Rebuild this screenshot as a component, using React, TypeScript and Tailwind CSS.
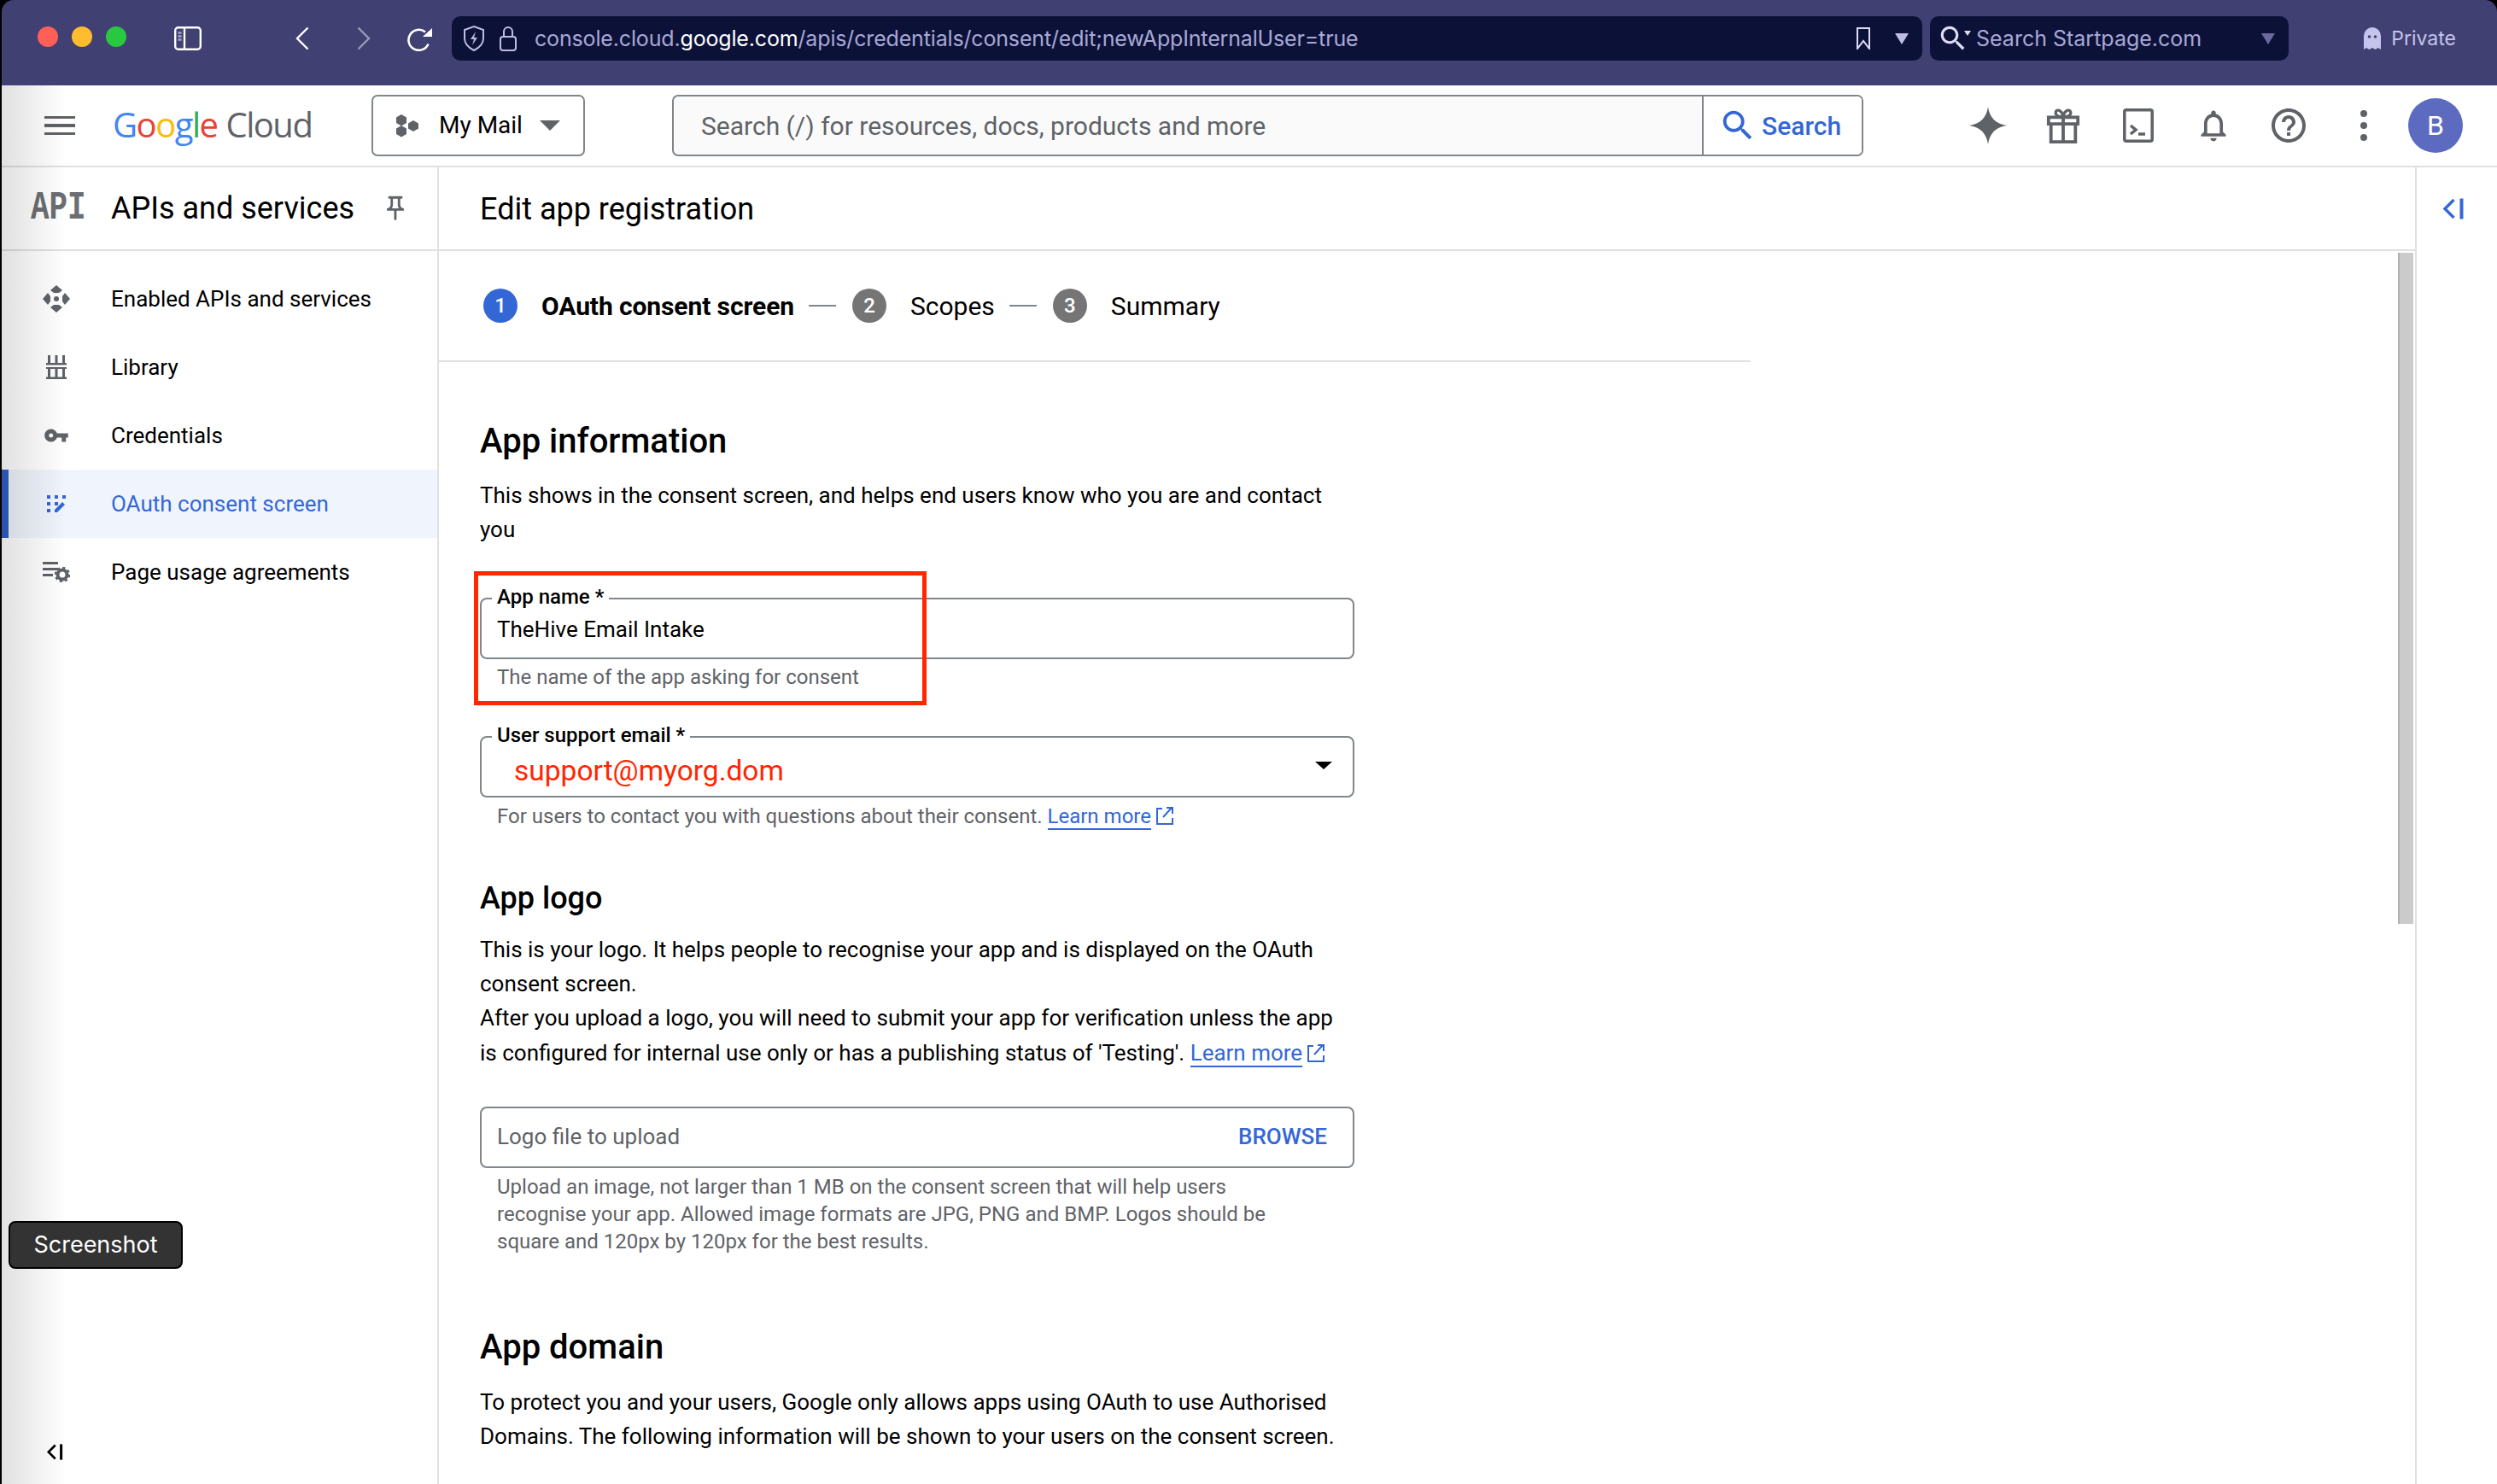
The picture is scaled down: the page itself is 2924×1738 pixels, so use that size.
import type { ReactNode } from 'react';

const roboto = 'font-[Roboto,sans-serif]';
const inter = 'font-[Inter,sans-serif]';

function Icon({ d, className }: { d: string; className: string }) {
  return (
    <svg viewBox="0 0 24 24" className={className} fill="currentColor">
      <path d={d} />
    </svg>
  );
}

const searchPath =
  'M15.5 14h-.79l-.28-.27C15.41 12.59 16 11.11 16 9.5 16 5.91 13.09 3 9.5 3S3 5.91 3 9.5 5.91 16 9.5 16c1.61 0 3.09-.59 4.23-1.57l.27.28v.79l5 4.99L20.49 19l-4.99-5zm-6 0C7.01 14 5 11.99 5 9.5S7.01 5 9.5 5 14 7.01 14 9.5 11.99 14 9.5 14z';
const keyPath =
  'M12.65 10C11.83 7.67 9.61 6 7 6c-3.31 0-6 2.69-6 6s2.69 6 6 6c2.61 0 4.83-1.67 5.65-4H17v4h4v-4h2v-4H12.65zM7 14c-1.1 0-2-.9-2-2s.9-2 2-2 2 .9 2 2-.9 2-2 2z';
const pinPath =
  'M14 4v5c0 1.12.37 2.16 1 3H9c.65-.86 1-1.9 1-3V4h4m3-2H7c-.55 0-1 .45-1 1s.45 1 1 1h1v5c0 1.66-1.34 3-3 3v2h5.97v7l1 1 1-1v-7H19v-2c-1.66 0-3-1.34-3-3V4h1c.55 0 1-.45 1-1s-.45-1-1-1z';
const bellPath =
  'M12 22c1.1 0 2-.9 2-2h-4c0 1.1.9 2 2 2zm6-6v-5c0-3.07-1.63-5.64-4.5-6.32V4c0-.83-.67-1.5-1.5-1.5s-1.5.67-1.5 1.5v.68C7.64 5.36 6 7.92 6 11v5l-2 2v1h16v-1l-2-2zm-2 1H8v-6c0-2.48 1.51-4.5 4-4.5s4 2.02 4 4.5v6z';
const helpPath =
  'M11 18h2v-2h-2v2zm1-16C6.48 2 2 6.48 2 12s4.48 10 10 10 10-4.48 10-10S17.52 2 12 2zm0 18c-4.41 0-8-3.59-8-8s3.59-8 8-8 8 3.59 8 8-3.59 8-8 8zm0-14c-2.21 0-4 1.79-4 4h2c0-1.1.9-2 2-2s2 .9 2 2c0 2-3 1.75-3 5h2c0-2.25 3-2.5 3-5 0-2.21-1.79-4-4-4z';

function CollapseIcon({ className }: { className: string }) {
  return (
    <svg viewBox="0 0 25 25" className={className} fill="none" stroke="currentColor" strokeWidth="3.4">
      <polyline points="13.5,2 3,12.5 13.5,23" />
      <line x1="22.5" y1="0.5" x2="22.5" y2="24.5" strokeWidth="4" />
    </svg>
  );
}

function OpenIcon() {
  return (
    <svg viewBox="0 0 20 22" className="inline-block w-[20px] h-[22px] ml-[6px] align-[-2px] text-[#3367d6]" fill="none" stroke="currentColor" strokeWidth="2">
      <path d="M7 3H1v18h18v-7" />
      <path d="M8 13 18 2M12 2h7v7" />
    </svg>
  );
}

function LearnMore() {
  return (
    <span className="whitespace-nowrap">
      <span className="text-[#3367d6] border-b-2 border-[#3367d6]">Learn more</span>
      <OpenIcon />
    </span>
  );
}

function BrowserBar() {
  return (
    <div className="h-[100px] shrink-0 bg-[#414072] rounded-t-[14px] flex items-start relative">
      <div className="flex gap-[16px] ml-[42px] mt-[31px]">
        <span className="w-[24px] h-[24px] rounded-full bg-[#ff5f57]" />
        <span className="w-[24px] h-[24px] rounded-full bg-[#febc2e]" />
        <span className="w-[24px] h-[24px] rounded-full bg-[#28c840]" />
      </div>
      <svg viewBox="0 0 32 28" className="w-[32px] h-[28px] ml-[56px] mt-[31px] text-white" fill="none" stroke="currentColor" strokeWidth="2.4">
        <rect x="1.2" y="1.2" width="29.6" height="25.6" rx="3.5" />
        <line x1="12" y1="1" x2="12" y2="27" />
        <path d="M4.5 7.5h4M4.5 11.5h4M4.5 15.5h4" stroke="#a9a8c9" />
      </svg>
      <svg viewBox="0 0 16 28" className="w-[16px] h-[28px] ml-[110px] mt-[31px] text-white" fill="none" stroke="currentColor" strokeWidth="2.4">
        <polyline points="14.5,1.5 2,14 14.5,26.5" />
      </svg>
      <svg viewBox="0 0 16 28" className="w-[16px] h-[28px] ml-[56px] mt-[31px] text-[#9a99b8]" fill="none" stroke="currentColor" strokeWidth="2.4">
        <polyline points="1.5,1.5 14,14 1.5,26.5" />
      </svg>
      <svg viewBox="0 0 30 28" className="w-[30px] h-[28px] ml-[43px] mt-[32px] text-white" fill="none" stroke="currentColor" strokeWidth="2.6">
        <path d="M24.5 19.5A12 12 0 1 1 21 5.5" />
        <polygon points="18,11 29,11 29,1" fill="currentColor" stroke="none" />
      </svg>
      <div className="ml-[22px] mt-[19px] w-[1722px] h-[52px] rounded-[10px] bg-[#0c1138] flex items-center shrink-0">
        <svg viewBox="0 0 26 32" className="w-[26px] h-[32px] ml-[13px] text-[#bdbce4]" fill="none" stroke="currentColor" strokeWidth="2">
          <path d="M13 2 24 6v10c0 7-5 11-11 14C7 27 2 23 2 16V6z" />
          <path d="M15 8 9 17h4l-2 7 6-9h-4z" fill="currentColor" stroke="none" />
        </svg>
        <svg viewBox="0 0 20 30" className="w-[20px] h-[30px] ml-[17px] text-[#bdbce4]" fill="none" stroke="currentColor" strokeWidth="2">
          <rect x="1" y="13" width="18" height="16" rx="3" />
          <path d="M5 13V7a5 5 0 0 1 10 0v6" />
        </svg>
        <span className={`${inter} ml-[21px] mt-[2px] text-[25px] text-[#a9a8d6] tracking-[-0.16px] whitespace-nowrap`}>
          console.cloud.<span className="text-white">google.com</span>/apis/credentials/consent/edit;newAppInternalUser=true
        </span>
        <svg viewBox="0 0 16 26" className="w-[16px] h-[26px] ml-auto text-[#dcdcf5]" fill="none" stroke="currentColor" strokeWidth="2">
          <path d="M1 1h14v24l-7-9-7 9z" />
        </svg>
        <span className="w-0 h-0 ml-[29px] mr-[16px] border-x-[8px] border-x-transparent border-t-[13px] border-t-[#bdbce4]" />
      </div>
      <div className="ml-[9px] mt-[19px] w-[420px] h-[52px] rounded-[10px] bg-[#0c1138] flex items-center shrink-0">
        <Icon d={searchPath} className="w-[38px] h-[38px] ml-[8px] text-[#dcdcf5]" />
        <span className="w-0 h-0 -ml-[6px] -mt-[12px] border-x-[4px] border-x-transparent border-t-[6px] border-t-[#dcdcf5]" />
        <span className={`${inter} ml-[6px] mt-[2px] text-[25px] text-[#a9a8d6] whitespace-nowrap`}>Search Startpage.com</span>
        <span className="w-0 h-0 ml-auto mr-[16px] border-x-[8px] border-x-transparent border-t-[13px] border-t-[#6b6a9e]" />
      </div>
      <div className="ml-auto mr-[48px] mt-[27px] flex items-center gap-[12px] text-[#c5c4ec]">
        <svg viewBox="0 0 20 26" className="w-[20px] h-[26px]" fill="currentColor">
          <path d="M0 10a10 10 0 0 1 20 0v16l-3-2-3.500 2-3.500-2-3.500 2L3 24l-3 2z" />
          <circle cx="6.500" cy="11" r="1.800" fill="#414072" />
          <circle cx="13.500" cy="11" r="1.800" fill="#414072" />
        </svg>
        <span className={`${inter} text-[23px] leading-[36px]`}>Private</span>
      </div>
    </div>
  );
}

function TopHeader() {
  return (
    <header className="h-[96px] shrink-0 bg-white border-b-2 border-[#e0e0e0] flex items-center relative">
      <div className="ml-[50px] w-[36px] flex flex-col gap-[6px]">
        <span className="h-[3.500px] bg-[#5f6368]" />
        <span className="h-[3.500px] bg-[#5f6368]" />
        <span className="h-[3.500px] bg-[#5f6368]" />
      </div>
      <div className="ml-[44px] w-[240px] -mt-[3px] flex items-baseline font-['Open_Sans',sans-serif] text-[40px] leading-[50px] tracking-[-1.5px]">
        <span className="text-[#4285f4]">G</span>
        <span className="text-[#ea4335]">o</span>
        <span className="text-[#fbbc04]">o</span>
        <span className="text-[#4285f4]">g</span>
        <span className="text-[#34a853]">l</span>
        <span className="text-[#ea4335]">e</span>
        <span className="text-[#5f6368] ml-[10px]">Cloud</span>
      </div>
      <div className="ml-[63px] w-[250px] h-[72px] shrink-0 rounded-[7px] border-2 border-[#80868b] flex items-center bg-white">
        <svg viewBox="0 0 28 28" className="w-[28px] h-[28px] ml-[27px] text-[#5f6368]" fill="currentColor">
          <polygon points="6,1 12,4.500 12,11 6,14.500 0,11 0,4.500" />
          <polygon points="6,14.500 12,18 12,24.500 6,28 0,24.500 0,18" transform="translate(0 -0.500)" />
          <polygon points="20,8 26,11.500 26,17.500 20,21 14,17.500 14,11.500" />
        </svg>
        <span className="ml-[22px] text-[28px] text-black whitespace-nowrap">My Mail</span>
        <span className="w-0 h-0 ml-[20px] border-x-[12px] border-x-transparent border-t-[12px] border-t-[#5f6368]" />
      </div>
      <div className="ml-[102px] w-[1395px] h-[72px] shrink-0 rounded-[7px] border-2 border-[#80868b] flex items-center bg-[#fafafa] overflow-hidden">
        <span className="pl-[32px] flex-1 text-[30px] text-[#5f6368] whitespace-nowrap">Search (/) for resources, docs, products and more</span>
        <div className="w-[187px] h-full bg-white border-l-2 border-[#80868b] flex items-center text-[#3367d6]">
          <Icon d={searchPath} className="w-[46px] h-[46px] ml-[17px]" />
          <span className="ml-[5px] text-[30px] font-medium">Search</span>
        </div>
      </div>
      <div className="absolute left-[2282px] top-[23px] flex items-center text-[#5f6368]">
        <div className="w-[88px] flex justify-center">
          <svg viewBox="0 0 44 44" className="w-[44px] h-[44px]" fill="currentColor">
            <path d="M22 0c1.500 12 9 20.500 22 22-13 1.500-20.500 10-22 22-1.500-12-9-20.500-22-22 13-1.500 20.500-10 22-22z" />
          </svg>
        </div>
        <div className="w-[88px] flex justify-center">
          <svg viewBox="0 0 40 44" className="w-[40px] h-[42px]" fill="none" stroke="currentColor" strokeWidth="4">
            <path d="M2 12h36v8H2zM5 20v22h30V20M20 12v30" />
            <path d="M20 11c-7 1-10-2-9-6 1-3 7-3 9 6zm0 0c7 1 10-2 9-6-1-3-7-3-9 6z" strokeWidth="3.500" />
          </svg>
        </div>
        <div className="w-[88px] flex justify-center">
          <svg viewBox="0 0 36 40" className="w-[36px] h-[40px]" fill="none" stroke="currentColor" strokeWidth="3.500">
            <rect x="1.800" y="1.800" width="32.400" height="36.400" rx="2" />
            <polyline points="9,20 15,25 9,30" />
            <line x1="18" y1="30" x2="26" y2="30" />
          </svg>
        </div>
        <div className="w-[88px] flex justify-center">
          <Icon d={bellPath} className="w-[44px] h-[44px]" />
        </div>
        <div className="w-[88px] flex justify-center">
          <Icon d={helpPath} className="w-[48px] h-[48px]" />
        </div>
        <div className="w-[88px] flex flex-col items-center gap-[6px]">
          <span className="w-[8px] h-[8px] rounded-full bg-[#5f6368]" />
          <span className="w-[8px] h-[8px] rounded-full bg-[#5f6368]" />
          <span className="w-[8px] h-[8px] rounded-full bg-[#5f6368]" />
        </div>
      </div>
      <div className="absolute left-[2818px] top-[15px] w-[64px] h-[64px] rounded-full bg-[#5c6bc0] text-white text-[32px] flex items-center justify-center">B</div>
    </header>
  );
}

const navItems: { label: string; icon: ReactNode; active?: boolean }[] = [
  {
    label: 'Enabled APIs and services',
    icon: (
      <svg viewBox="0 0 32 32" className="w-[32px] h-[32px]" fill="currentColor">
        <path d="M16 0 23 6 19 9H13L9 6zM16 32 9 26l4-3h6l4 3zM0 16l6-7 3 4v6l-3 4zM32 16l-6 7-3-4v-6l3-4z" />
        <circle cx="16" cy="16" r="3" />
      </svg>
    ),
  },
  {
    label: 'Library',
    icon: (
      <svg viewBox="0 0 24 28" className="w-[24px] h-[28px]" fill="currentColor">
        <path d="M2 0h3v9H2zM10.500 0h3v9h-3zM19 0h3v9h-3zM0 9h24v2.500H0zM2 16h3v10H2zM10.500 16h3v10h-3zM19 16h3v10h-3zM0 25.500h24V28H0zM0 14h24v2H0z" />
      </svg>
    ),
  },
  {
    label: 'Credentials',
    icon: <Icon d={keyPath} className="w-[30px] h-[30px]" />,
  },
  {
    label: 'OAuth consent screen',
    active: true,
    icon: (
      <svg viewBox="0 0 22 20" className="w-[22px] h-[20px]" fill="currentColor">
        <path d="M0 0h4v4H0zM9 0h4v4H9zM18 0h4v4h-4zM0 8h4v4H0zM0 16h4v4H0zM9 8h4v4H9z" />
        <path d="M9 20v-3l9-9 3 3-9 9z" />
      </svg>
    ),
  },
  {
    label: 'Page usage agreements',
    icon: (
      <svg viewBox="0 0 32 24" className="w-[32px] h-[24px]" fill="currentColor">
        <path d="M0 0h18v3H0zM0 7h18v3H0zM0 14h12v3H0z" />
        <circle cx="23" cy="15" r="5.500" fill="none" stroke="currentColor" strokeWidth="4" />
        <circle cx="23" cy="15" r="8" fill="none" stroke="currentColor" strokeWidth="2.500" strokeDasharray="3 3.300" />
      </svg>
    ),
  },
];

function Sidebar() {
  return (
    <aside className="w-[512px] shrink-0 border-r-2 border-[#e0e0e0] flex flex-col bg-white">
      <div className="h-[98px] shrink-0 border-b-2 border-[#e0e0e0] flex items-center">
        <span className="ml-[34px] w-[64px] scale-x-[0.78] origin-left font-['Liberation_Mono',monospace] font-bold text-[#6b6e72] text-[46px] leading-none whitespace-nowrap">API</span>
        <span className="ml-[30px] text-[36px] text-black whitespace-nowrap">APIs and services</span>
        <Icon d={pinPath} className="w-[34px] h-[34px] ml-[31px] text-[#5f6368]" />
      </div>
      <nav className="mt-[16px] flex flex-col">
        {navItems.map((item) => (
          <div
            key={item.label}
            className={`h-[80px] flex items-center border-l-[8px] ${item.active ? 'border-[#2f5fc4] bg-[#f0f4fc] text-[#3367d6]' : 'border-transparent text-black'}`}
          >
            <span className={`w-[52px] ml-[36px] flex justify-center -translate-x-[6px] ${item.active ? 'text-[#3367d6]' : 'text-[#5f6368]'}`}>{item.icon}</span>
            <span className="ml-[32px] text-[26px] whitespace-nowrap">{item.label}</span>
          </div>
        ))}
      </nav>
      <div className="mt-auto mb-[28px] ml-[52px] text-black">
        <CollapseIcon className="block w-[20px] h-[19px]" />
      </div>
    </aside>
  );
}

function StepDot({ n, active }: { n: number; active?: boolean }) {
  return (
    <span className={`w-[40px] h-[40px] rounded-full text-white text-[24px] font-medium flex items-center justify-center ${active ? 'bg-[#3367d6]' : 'bg-[#757575]'}`}>{n}</span>
  );
}

function Stepper() {
  return (
    <div className="w-[1536px] h-[130px] shrink-0 border-b-2 border-[#e0e0e0] flex items-center pl-[52px] text-[30px] text-black">
      <StepDot n={1} active />
      <span className="ml-[28px] font-bold tracking-[-0.1px] whitespace-nowrap">OAuth consent screen</span>
      <span className="ml-[17px] w-[32px] h-[2px] bg-[#80868b]" />
      <span className="ml-[19px]"><StepDot n={2} /></span>
      <span className="ml-[28px] whitespace-nowrap">Scopes</span>
      <span className="ml-[17px] w-[32px] h-[2px] bg-[#80868b]" />
      <span className="ml-[19px]"><StepDot n={3} /></span>
      <span className="ml-[28px] whitespace-nowrap">Summary</span>
    </div>
  );
}

function OutlinedField({ label, children }: { label?: string; children: ReactNode }) {
  return (
    <div className="relative w-[1024px] h-[72px] rounded-[8px] border-2 border-[#80868b] flex items-center pl-[18px] pr-[24px] bg-white">
      {label && (
        <span className="absolute left-[12px] -top-[18px] px-[6px] bg-white text-[24px] leading-[30px] font-medium text-black whitespace-nowrap">{label}</span>
      )}
      {children}
    </div>
  );
}

function Form() {
  return (
    <div className="flex-1 min-w-0 relative overflow-hidden">
      <Stepper />
      <div className="pl-[48px] text-black">
        <h2 className="mt-[69px] text-[40px] leading-[48px] font-medium">App information</h2>
        <p className="mt-[19px] w-[1015px] text-[26px] leading-[40px]">This shows in the consent screen, and helps end users know who you are and contact you</p>

        <div className="mt-[60px]">
          <OutlinedField label="App name *">
            <span className="mt-[2px] text-[26px]">TheHive Email Intake</span>
          </OutlinedField>
        </div>
        <p className="mt-[5px] pl-[20px] text-[24px] leading-[32px] text-[#5f6368]">The name of the app asking for consent</p>

        <div className="mt-[53px]">
          <OutlinedField label="User support email *">
            <span className="ml-[20px] mt-[10px] text-[33.500px] text-[#ff2600]">support@myorg.dom</span>
            <span className="w-0 h-0 ml-auto -mt-[4px] mr-[0px] border-x-[10px] border-x-transparent border-t-[9px] border-t-black" />
          </OutlinedField>
        </div>
        <p className="mt-[6px] pl-[20px] text-[24px] leading-[32px] text-[#5f6368]">
          For users to contact you with questions about their consent. <LearnMore />
        </p>

        <h2 className="mt-[58px] text-[36px] leading-[44px] font-medium">App logo</h2>
        <p className="mt-[18px] w-[1015px] text-[26px] leading-[40.200px]">
          This is your logo. It helps people to recognise your app and is displayed on the OAuth consent screen.
          <br />
          After you upload a logo, you will need to submit your app for verification unless the app is configured for internal use only or has a publishing status of &#39;Testing&#39;. <LearnMore />
        </p>

        <div className="mt-[43px]">
          <OutlinedField>
            <span className="text-[26px] text-[#5f6368]">Logo file to upload</span>
            <span className="ml-auto mr-[6px] text-[26px] font-medium text-[#3367d6]">BROWSE</span>
          </OutlinedField>
        </div>
        <p className="mt-[6px] pl-[20px] w-[960px] text-[24px] leading-[32px] text-[#5f6368]">
          Upload an image, not larger than 1 MB on the consent screen that will help users recognise your app. Allowed image formats are JPG, PNG and BMP. Logos should be square and 120px by 120px for the best results.
        </p>

        <h2 className="mt-[86px] text-[40px] leading-[44px] font-medium">App domain</h2>
        <p className="mt-[22px] w-[1030px] text-[26px] leading-[40px]">To protect you and your users, Google only allows apps using OAuth to use Authorised Domains. The following information will be shown to your users on the consent screen.</p>
      </div>

      {/* annotation drawn over the app name field */}
      <div className="absolute left-[41px] top-[375px] w-[530px] h-[157px] border-[5px] border-[#ff2600] pointer-events-none" />
    </div>
  );
}

function Main() {
  return (
    <main className="flex-1 min-w-0 flex flex-col bg-white">
      <div className="h-[98px] shrink-0 border-b-2 border-[#e0e0e0] flex items-center pl-[48px] pt-[2px]">
        <h1 className="text-[36px] text-black whitespace-nowrap">Edit app registration</h1>
      </div>
      <div className="flex-1 min-h-0 flex">
        <Form />
        <div className="w-[18px] shrink-0 mr-[2px] pt-[2px]">
          <div className="h-[786px] bg-[#cbcbcb] border-l-2 border-[#b0b0b0]" />
        </div>
      </div>
    </main>
  );
}

export default function App() {
  return (
    <div className={`${roboto} relative w-[2924px] h-[1738px] overflow-hidden bg-black pl-[2px] flex flex-col`}>
      <BrowserBar />
      <TopHeader />
      <div className="flex-1 min-h-0 flex">
        <Sidebar />
        <Main />
        <div className="w-[96px] shrink-0 bg-white border-l-2 border-[#e0e0e0] pt-[36px] pl-[30px] text-[#3367d6]">
          <CollapseIcon className="w-[25px] h-[25px]" />
        </div>
      </div>

      {/* window shadow falling on the page's left edge */}
      <div className="absolute left-[2px] top-[100px] bottom-0 w-[76px] bg-linear-to-r from-black/12 to-transparent pointer-events-none" />

      <div className={`${inter} absolute left-[10px] top-[1430px] w-[204px] h-[56px] rounded-[8px] bg-[#333333] border-2 border-black text-white text-[27px] flex items-center justify-center`}>
        Screenshot
      </div>
    </div>
  );
}
